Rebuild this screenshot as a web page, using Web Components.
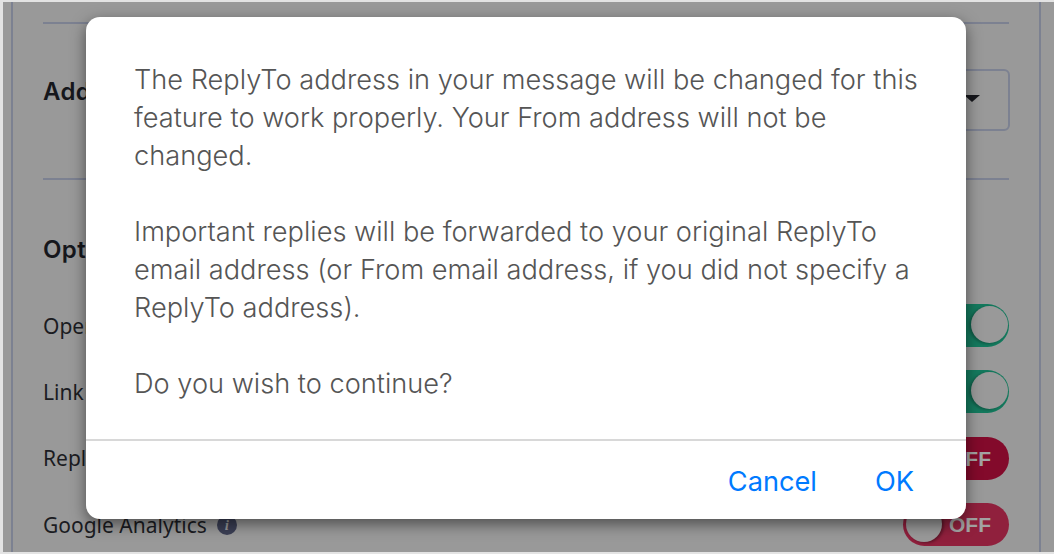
<!DOCTYPE html>
<html><head><meta charset="utf-8">
<style>
html,body{margin:0;padding:0;height:100%;background:#e3e3e3;overflow:hidden}
</style></head><body>
<app-frame>
  <settings-panel>
    <section-row><strong>Address</strong><select-box></select-box></section-row>
    <h-rule></h-rule>
    <options-head>Options</options-head>
    <toggle-row state="on">Open Tracking</toggle-row>
    <toggle-row state="on">Link Tracking</toggle-row>
    <toggle-row state="off" vivid>Reply Tracking</toggle-row>
    <toggle-row state="off" info>Google Analytics</toggle-row>
  </settings-panel>
  <confirm-dialog slot="modal">
    <p>The ReplyTo address in your message will be changed for this feature to work properly. Your From address will not be changed.</p>
    <p>Important replies will be forwarded to your original ReplyTo email address (or From email address, if you did not specify a ReplyTo address).</p>
    <p>Do you wish to continue?</p>
  </confirm-dialog>
</app-frame>
<script>
function def(name,css,html){
  customElements.define(name,class extends HTMLElement{
    connectedCallback(){
      if(this.shadowRoot)return;
      const r=this.attachShadow({mode:'open'});
      r.innerHTML='<style>'+css+'</style>'+html;
    }
  });
}
def('app-frame',`
:host{display:block;position:relative;box-sizing:border-box;width:1054px;height:554px;padding:2px 0 2px 3px;font-family:Inter,"Liberation Sans",sans-serif}
.shade{height:100%;background:#999;box-sizing:border-box}
.modal{position:absolute;left:86px;top:17px}
`,`<div class="shade"><slot></slot></div><div class="modal"><slot name="modal"></slot></div>`);
def('settings-panel',`
:host{display:block;box-sizing:border-box;height:100%;margin:0 13px 0 8px;padding:0 30px;border-left:2px solid #7c8191;border-right:2px solid #7c8191;color:#16171c;overflow:hidden}
.top{height:2px;background:#7c8191;margin-top:20px}
`,`<div class="top"></div><slot></slot>`);
def('section-row',`
:host{display:flex;justify-content:space-between;align-items:flex-start;height:154px;font-size:24px;font-weight:600;letter-spacing:.4px}
::slotted(strong){margin-top:54px;line-height:28px;font-weight:600}
`,`<slot></slot>`);
def('select-box',`
:host{display:flex;align-items:center;justify-content:flex-end;box-sizing:border-box;width:300px;height:62px;border:2px solid #7c8191;border-radius:6px;padding-right:28px;margin:45px -1px 0 0}
i{display:block;width:0;height:0;border:8px solid transparent;border-top:7px solid #16171c;border-bottom:0;margin-top:-4px}
`,`<i></i>`);
def('h-rule',`:host{display:block;height:2px;background:#7c8191}`,``);
def('options-head',`:host{display:block;font-size:24px;font-weight:600;letter-spacing:.4px;margin-top:56px;margin-bottom:40px;line-height:28px}`,`<slot></slot>`);
def('toggle-row',`
:host{display:flex;align-items:center;justify-content:space-between;height:43px;margin-bottom:23.4px;font-family:"Noto Sans",sans-serif;font-size:21px;color:#1b1c22}
.l{display:flex;align-items:center;gap:10px}
.info{width:20px;height:20px;border-radius:50%;background:#3b3f55;color:#999;font:italic 700 15px/20px "Liberation Serif",serif;text-align:center;display:none}
:host([info]) .info{display:block}
.t{position:relative;width:106px;height:43px;border-radius:21.5px;background:#147a5e}
.k{position:absolute;top:1.5px;right:1.5px;width:37px;height:37px;border-radius:50%;background:#999;box-shadow:-2px 1px 3px rgba(0,0,0,.28)}
.x{display:none;position:absolute;right:18px;top:0;font:700 21px/43px "Liberation Sans",sans-serif;color:#a3a3a3}
:host([state=off]) .t{background:#90203d}
:host([vivid]) .t{background:#830a2b}
:host([state=off]) .k{left:2.5px;right:auto;top:2.5px;width:36px;height:36px;box-shadow:2px 1px 3px rgba(0,0,0,.35)}
:host([state=off]) .x{display:block}
`,`<span class="l"><slot></slot><span class="info">i</span></span><span class="t"><span class="x">OFF</span><span class="k"></span></span>`);
def('confirm-dialog',`
:host{box-sizing:border-box;width:880px;height:502px;background:#fff;border-radius:14px;box-shadow:0 5px 15px rgba(0,0,0,.5);display:flex;flex-direction:column;font-family:Inter,"Liberation Sans",sans-serif;color:#555}
.body{height:424px;padding:44px 48px 0;box-sizing:border-box;border-bottom:2px solid #d8d8d8;font-size:27.2px;line-height:38px;font-weight:300}
::slotted(p){margin:0 0 38px}
.foot{display:flex;justify-content:flex-end;gap:58px;padding:25px 52px 0;font-size:27.2px;line-height:32px;color:#007aff}
`,`<div class="body"><slot></slot></div><div class="foot"><span>Cancel</span><span>OK</span></div>`);
</script>
</body></html>
